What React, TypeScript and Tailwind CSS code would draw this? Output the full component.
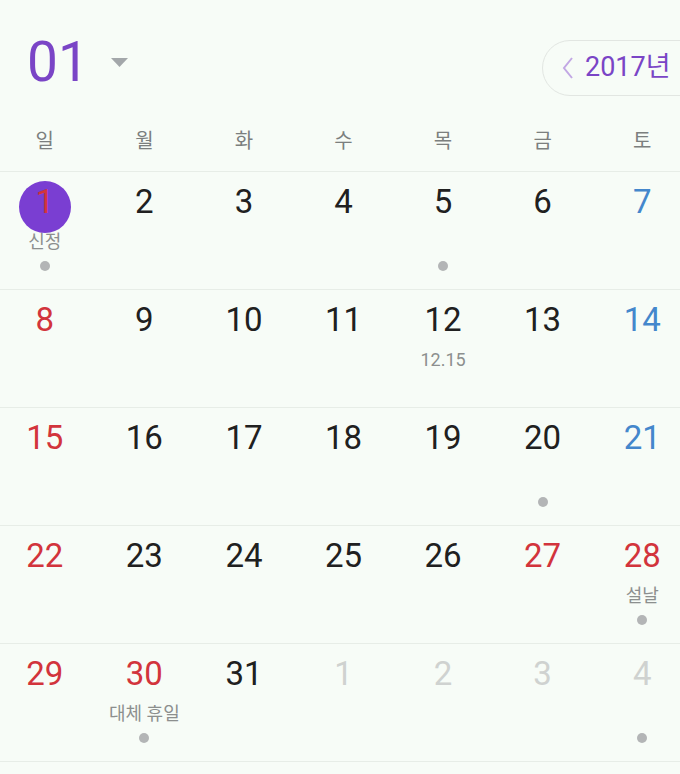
import React from 'react';

type Day = {
  n: number;
  color: 'red' | 'blue' | 'black' | 'dim';
  label?: string;
  dot?: boolean;
  today?: boolean;
};

const colorClass: Record<Day['color'], string> = {
  red: 'text-[#d2343c]',
  blue: 'text-[#4487cc]',
  black: 'text-[#202020]',
  dim: 'text-[#cfd2d0]',
};

const weekdays = ['일', '월', '화', '수', '목', '금', '토'];

const weeks: Day[][] = [
  [
    { n: 1, color: 'red', label: '신정', dot: true, today: true },
    { n: 2, color: 'black' },
    { n: 3, color: 'black' },
    { n: 4, color: 'black' },
    { n: 5, color: 'black', dot: true },
    { n: 6, color: 'black' },
    { n: 7, color: 'blue' },
  ],
  [
    { n: 8, color: 'red' },
    { n: 9, color: 'black' },
    { n: 10, color: 'black' },
    { n: 11, color: 'black' },
    { n: 12, color: 'black', label: '12.15' },
    { n: 13, color: 'black' },
    { n: 14, color: 'blue' },
  ],
  [
    { n: 15, color: 'red' },
    { n: 16, color: 'black' },
    { n: 17, color: 'black' },
    { n: 18, color: 'black' },
    { n: 19, color: 'black' },
    { n: 20, color: 'black', dot: true },
    { n: 21, color: 'blue' },
  ],
  [
    { n: 22, color: 'red' },
    { n: 23, color: 'black' },
    { n: 24, color: 'black' },
    { n: 25, color: 'black' },
    { n: 26, color: 'black' },
    { n: 27, color: 'red' },
    { n: 28, color: 'red', label: '설날', dot: true },
  ],
  [
    { n: 29, color: 'red' },
    { n: 30, color: 'red', label: '대체 휴일', dot: true },
    { n: 31, color: 'black' },
    { n: 1, color: 'dim' },
    { n: 2, color: 'dim' },
    { n: 3, color: 'dim' },
    { n: 4, color: 'dim', dot: true },
  ],
];

function DayCell({ day }: { day: Day }) {
  return (
    <div className="flex flex-col items-center">
      <div className="relative mt-[10px] h-[40px] flex items-center justify-center">
        {day.today && (
          <div className="absolute left-1/2 top-[-1px] -translate-x-1/2 w-[52px] h-[52px] rounded-full bg-[#7a3ed2]" />
        )}
        <span className={`relative text-[33px] leading-[40px] ${colorClass[day.color]}`}>{day.n}</span>
      </div>
      <div className="mt-[9px] h-[22px] text-[18px] leading-[22px] text-[#8c8f8e]">{day.label}</div>
      <div className="mt-[8px] h-[10px] flex items-center justify-center">
        {day.dot && <div className="w-[10px] h-[10px] rounded-full bg-[#b3b5b6]" />}
      </div>
    </div>
  );
}

export default function App() {
  return (
    <div
      className="w-[680px] h-[774px] overflow-hidden bg-[#f7fcf7]"
      style={{ fontFamily: 'Roboto, "Noto Sans CJK KR", sans-serif' }}
    >
      {/* Header */}
      <div className="flex items-start h-[115px]">
        <div className="ml-[27px] mt-[30px] h-[64px] text-[55px] leading-[64px] text-[#7a45c6]">01</div>
        <svg className="ml-[22px] mt-[58px]" width="17" height="9" viewBox="0 0 17 9">
          <path d="M0 0 H17 L8.5 9 Z" fill="#a3a7aa" />
        </svg>
        <div className="ml-auto -mr-[44px] mt-[40px] w-[182px] h-[56px] rounded-full border border-[#e2e6e2] flex items-center pl-[18px]">
          <svg width="14" height="24" viewBox="0 0 14 24" className="mr-[10px]">
            <path d="M11 2 L3 12 L11 22" fill="none" stroke="#c2a8e4" strokeWidth="2" />
          </svg>
          <span className="text-[27px] leading-[30px] text-[#7a45c6] -mt-[3px]">2017년</span>
        </div>
      </div>

      <div className="w-[697px] -ml-[5px]">
        {/* Weekdays */}
        <div className="grid grid-cols-7 h-[56px] pb-[4px] items-center">
          {weekdays.map((w) => (
            <div key={w} className="text-center text-[20px] leading-[24px] text-[#7b7f7e]">
              {w}
            </div>
          ))}
        </div>

        {weeks.map((week, i) => (
          <div key={i} className="grid grid-cols-7 h-[118px] border-t border-[#e7ede7]">
            {week.map((d, j) => (
              <DayCell key={j} day={d} />
            ))}
          </div>
        ))}
        <div className="border-t border-[#e7ede7]" />
      </div>
    </div>
  );
}
